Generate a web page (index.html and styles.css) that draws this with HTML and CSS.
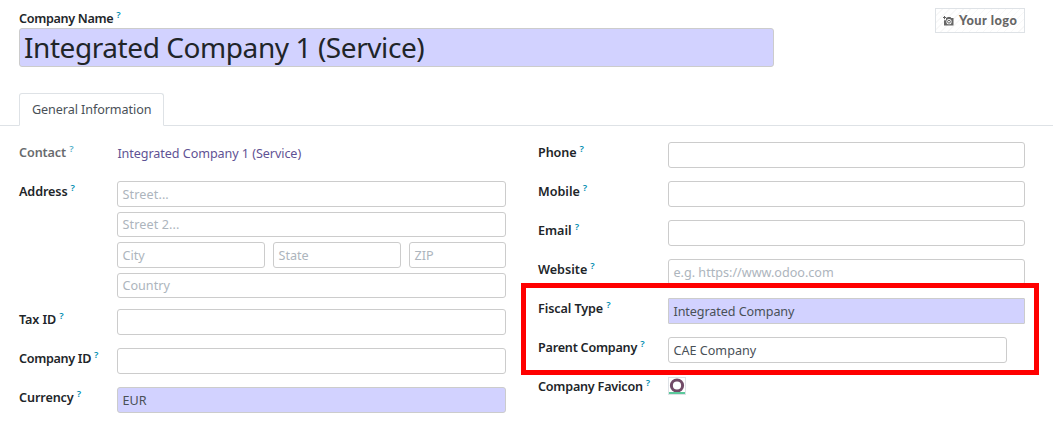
FILE: index.html
```html
<!DOCTYPE html>
<html lang="en">
<head>
<meta charset="utf-8">
<title>Company</title>
<link rel="stylesheet" href="styles.css">
</head>
<body>
<main class="sheet">
  <header class="head">
    <div class="name-block">
      <div class="label"><span class="tight-3">Company Name</span><sup>?</sup></div>
      <div class="name-input required"><span>Integrated Company 1 (Service)</span></div>
    </div>
    <div class="logo">
      <svg class="camera" viewBox="0 0 11 10"><path fill="#666" fill-rule="evenodd" d="M1 0h1v1h1.300v1H2v1.300H1V2H0V1h1zM4.500 1h3l.7 1H10.500v7.500H1V4.300h2V2h1zM6 3.100a2.600 2.600 0 1 0 0 5.200a2.600 2.600 0 0 0 0-5.200z"/><circle cx="6" cy="5.700" r="1.400" fill="none" stroke="#666" stroke-width="1"/></svg>
      <span>Your logo</span>
    </div>
  </header>
  <nav class="tabs"><div class="tab"><span>General Information</span></div></nav>
  <section class="columns">
    <div class="group left">
      <div class="row"><div class="label muted"><span class="tight-1">Contact</span><sup>?</sup></div><a class="link">Integrated Company 1 (Service)</a></div>
      <div class="row address"><div class="label"><span class="tight-1">Address</span><sup>?</sup></div>
        <div class="stack">
          <div class="input hint"><span class="loose">Street...</span></div>
          <div class="input hint short"><span class="loose">Street 2...</span></div>
          <div class="trio"><div class="input hint"><span>City</span></div><div class="input hint"><span>State</span></div><div class="input hint"><span>ZIP</span></div></div>
          <div class="input hint short"><span>Country</span></div>
        </div>
      </div>
      <div class="row"><div class="label"><span class="tight-1">Tax ID</span><sup>?</sup></div><div class="input"></div></div>
      <div class="row"><div class="label"><span class="tight-3">Company ID</span><sup>?</sup></div><div class="input"></div></div>
      <div class="row"><div class="label"><span class="tight-1">Currency</span><sup>?</sup></div><div class="input required"><span>EUR</span></div></div>
    </div>
    <div class="group right">
      <div class="row"><div class="label"><span class="tight-1">Phone</span><sup>?</sup></div><div class="input"></div></div>
      <div class="row"><div class="label"><span>Mobile</span><sup>?</sup></div><div class="input"></div></div>
      <div class="row"><div class="label"><span>Email</span><sup>?</sup></div><div class="input"></div></div>
      <div class="row"><div class="label"><span>Website</span><sup>?</sup></div><div class="input hint"><span>e.g. https://www.odoo.com</span></div></div>
      <div class="row"><div class="label"><span class="tight-1">Fiscal Type</span><sup>?</sup></div><div class="input required square"><span class="tight-1">Integrated Company</span></div></div>
      <div class="row"><div class="label"><span class="tight-2">Parent Company</span><sup>?</sup></div><div class="input parent"><span>CAE Company</span></div></div>
      <div class="row"><div class="label"><span class="tight-2">Company Favicon</span><sup>?</sup></div>
        <svg class="favicon" viewBox="0 0 18 18"><rect x=".5" y=".5" width="17" height="17" fill="#fff" stroke="#dee2e6"/><circle cx="9" cy="8.500" r="5.600" fill="none" stroke="#714b67" stroke-width="3"/><path fill="#5bc99b" d="M1 15h16v2H1z"/></svg>
      </div>
    </div>
  </section>
  <div class="highlight"></div>
</main>
</body>
</html>
```
FILE: styles.css
```css
* { box-sizing: border-box; }
body { margin: 0; background: #fff; color: #495057; font: 12.6px/18px "Noto Sans", sans-serif; }
.sheet { position: relative; width: 1053px; height: 426px; overflow: hidden; white-space: nowrap; }
.head { display: flex; justify-content: space-between; align-items: flex-start; height: 93px; padding: 8px 28px 0 19px; }
.name-block { width: 755px; }
.name-block .label { height: 20px; padding-top: 2px; }
.label { display: flex; align-items: flex-start; gap: 3px; color: #212529; font-weight: 600; }
.label sup { color: #008db0; font-size: 9.5px; line-height: 10px; font-weight: 600; vertical-align: baseline; }
.tight-1 { letter-spacing: -.09px; }
.tight-2 { letter-spacing: -.22px; }
.tight-3 { letter-spacing: -.32px; }
.loose { letter-spacing: .12px; }
.muted { opacity: .68; }
.name-input { height: 39px; padding: 0 4px; border: 1px solid #ccc; border-radius: 3px; font-size: 28px; line-height: 37px; letter-spacing: -.43px; color: #212529; }
.required { background: #d2d2ff; }
.logo { display: flex; align-items: center; gap: 5px; width: 90px; height: 25px; padding-left: 7px; border: 1px solid #dee2e6; color: #666; font: 900 12.8px/23px Lato, sans-serif; letter-spacing: .5px; background: repeating-linear-gradient(135deg, #fff 0 4px, #f8f8f8 4px 5px); }
.camera { width: 11px; height: 10px; flex: none; }
.tabs { height: 33px; padding-left: 19px; border-bottom: 1px solid #dee2e6; }
.tab { width: 145px; height: 33px; padding: 0 12px; border: 1px solid #dee2e6; border-bottom-color: #fff; border-radius: 3px 3px 0 0; background: #fff; line-height: 31px; letter-spacing: -.08px; }
.columns { display: flex; gap: 32px; padding: 16px 28px 0 19px; }
.group { display: flex; flex-direction: column; gap: 13px; width: 487px; }
.row { display: grid; height: 26px; align-items: start; }
.left .row { grid-template-columns: 98px 389px; }
.right .row { grid-template-columns: 130px 357px; }
.row .label { padding-top: 2px; }
.left .address { height: 115px; }
.stack { display: flex; flex-direction: column; gap: 5px; height: 117px; }
.input { height: 26px; padding: 0 4.5px; border: 1px solid #ccc; border-radius: 3px; line-height: 25px; background-color: #fff; }
.input.required { background: #d2d2ff; }
.short { height: 25px; line-height: 23px; }
.hint { color: #adb5bd; }
.square { border-radius: 1px; }
.trio { display: grid; grid-template-columns: 148px 128px 97px; gap: 8px; }
.parent { width: 339px; }
.link { color: #5f5294; line-height: 24px; letter-spacing: -.07px; padding-left: .4px; }
.favicon { width: 18px; height: 18px; margin-top: 1px; }
.highlight { position: absolute; left: 521px; top: 283px; width: 518px; height: 92px; border: 5px solid #f00; }
```
